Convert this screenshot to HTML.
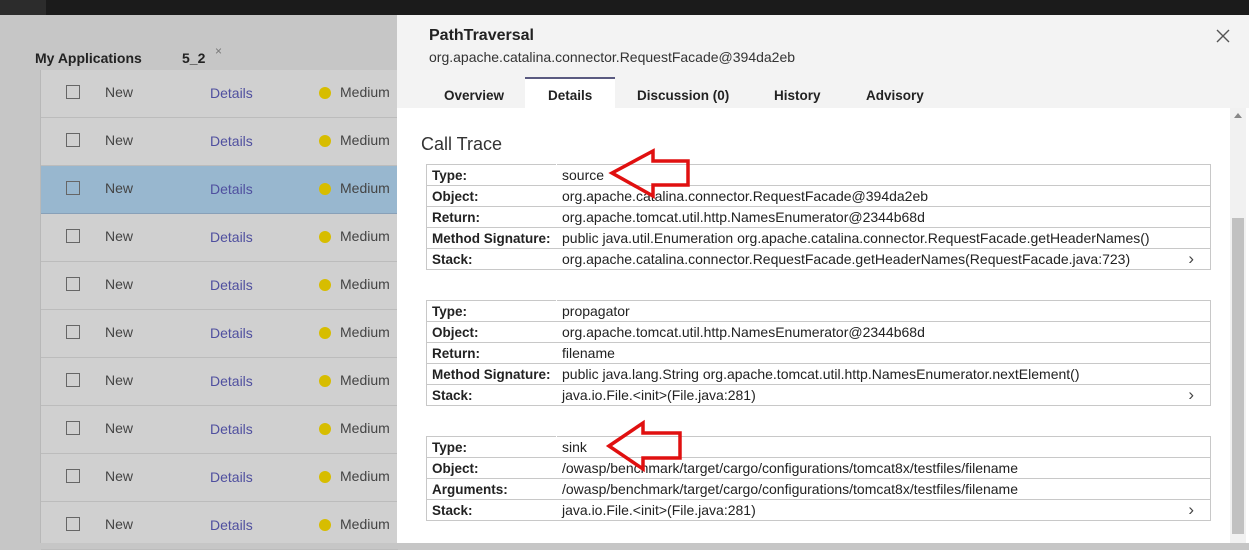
<!DOCTYPE html>
<html><head><style>
*{margin:0;padding:0;box-sizing:border-box}
body{width:1249px;height:543px;overflow:hidden;position:relative;background:#c6c6c6;font-family:"Liberation Sans",sans-serif;}
.top{position:absolute;left:0;top:0;width:1249px;height:15px;background:#1b1b1b}
.top2{position:absolute;left:0;top:0;width:46px;height:15px;background:#2c2c2c}
.apps{position:absolute;left:35px;top:50px;font-size:14px;font-weight:bold;color:#222}
.tab52{position:absolute;left:182px;top:50px;font-size:14px;font-weight:bold;color:#222}
.x52{position:absolute;left:215px;top:44px;font-size:12px;color:#777}
.rows{position:absolute;left:40px;top:70px;width:357px;height:473px;background:#d0d0d0;border-left:1px solid #b8b8b8}
.row{position:absolute;left:0;width:357px;height:48px;border-bottom:1px solid #bcbcbc;font-size:14px;color:#444}
.row.sel{background:#98b7cf;border-bottom-color:#88a0b8}
.cb{position:absolute;left:25px;top:15px;width:14px;height:14px;border:1px solid #666}
.new{position:absolute;left:64px;top:14px}
.det{position:absolute;left:169px;top:15px;color:#4f4f9f}
.dot{position:absolute;left:278px;top:17px;width:12px;height:12px;border-radius:50%;background:#d7bd00}
.med{position:absolute;left:299px;top:14px}
.panel{position:absolute;left:397px;top:15px;width:852px;height:528px;background:#fff}
.ph{position:absolute;left:0;top:0;width:852px;height:93px;background:#f3f3f3}
.title{position:absolute;left:32px;top:12px;font-size:16px;font-weight:bold;color:#222}
.sub{position:absolute;left:32px;top:34px;font-size:14px;color:#333}
.tab{position:absolute;top:73px;font-size:13.5px;font-weight:bold;color:#222}
.tabact{position:absolute;left:128px;top:62px;width:90px;height:31px;background:#fff;border-top:2px solid #5a5a80}
.ct{position:absolute;left:24px;top:119px;font-size:18px;color:#333}
table{position:absolute;left:29px;width:785px;border-collapse:collapse;table-layout:fixed;font-size:14px;color:#222}
td{border:1px solid #c8c8c8;height:21px;padding:0 5px;white-space:nowrap;overflow:visible}
td.k{font-weight:bold;width:130px;border-right-color:#fff;font-size:13.5px}
td.k+td{position:relative}
.ch{position:absolute;right:16px;top:0px;color:#444;font-size:17px}
.sb{position:absolute;left:1230px;top:108px;width:16px;height:435px;background:#f1f1f1}
.th{position:absolute;left:1232px;top:218px;width:12px;height:316px;background:#c1c1c1}
.up{position:absolute;left:1234px;top:113px;width:0;height:0;border-left:4px solid transparent;border-right:4px solid transparent;border-bottom:5px solid #888}
</style></head><body>
<div class="top"></div><div class="top2"></div>
<div class="apps">My Applications</div><div class="tab52">5_2</div><div class="x52">×</div>
<div class="rows">
<div class="row" style="top:0"><div class="cb"></div><div class="new">New</div><div class="det">Details</div><div class="dot"></div><div class="med">Medium</div></div>
<div class="row" style="top:48px"><div class="cb"></div><div class="new">New</div><div class="det">Details</div><div class="dot"></div><div class="med">Medium</div></div>
<div class="row sel" style="top:96px"><div class="cb"></div><div class="new">New</div><div class="det">Details</div><div class="dot"></div><div class="med">Medium</div></div>
<div class="row" style="top:144px"><div class="cb"></div><div class="new">New</div><div class="det">Details</div><div class="dot"></div><div class="med">Medium</div></div>
<div class="row" style="top:192px"><div class="cb"></div><div class="new">New</div><div class="det">Details</div><div class="dot"></div><div class="med">Medium</div></div>
<div class="row" style="top:240px"><div class="cb"></div><div class="new">New</div><div class="det">Details</div><div class="dot"></div><div class="med">Medium</div></div>
<div class="row" style="top:288px"><div class="cb"></div><div class="new">New</div><div class="det">Details</div><div class="dot"></div><div class="med">Medium</div></div>
<div class="row" style="top:336px"><div class="cb"></div><div class="new">New</div><div class="det">Details</div><div class="dot"></div><div class="med">Medium</div></div>
<div class="row" style="top:384px"><div class="cb"></div><div class="new">New</div><div class="det">Details</div><div class="dot"></div><div class="med">Medium</div></div>
<div class="row" style="top:432px"><div class="cb"></div><div class="new">New</div><div class="det">Details</div><div class="dot"></div><div class="med">Medium</div></div>
</div>
<div class="panel">
<div class="ph">
<div class="title">PathTraversal</div>
<div class="sub">org.apache.catalina.connector.RequestFacade@394da2eb</div>
<svg style="position:absolute;left:819px;top:14px" width="14" height="14"><path d="M1 1L13 13M13 1L1 13" stroke="#555" stroke-width="1.4"/></svg>
<div class="tabact"></div>
<div class="tab" style="left:47px">Overview</div>
<div class="tab" style="left:151px">Details</div>
<div class="tab" style="left:240px">Discussion (0)</div>
<div class="tab" style="left:377px">History</div>
<div class="tab" style="left:469px">Advisory</div>
</div>
<div class="ct">Call Trace</div>
<table style="top:149px">
<tr><td class="k">Type:</td><td>source</td></tr>
<tr><td class="k">Object:</td><td>org.apache.catalina.connector.RequestFacade@394da2eb</td></tr>
<tr><td class="k">Return:</td><td>org.apache.tomcat.util.http.NamesEnumerator@2344b68d</td></tr>
<tr><td class="k">Method Signature:</td><td>public java.util.Enumeration org.apache.catalina.connector.RequestFacade.getHeaderNames()</td></tr>
<tr><td class="k">Stack:</td><td>org.apache.catalina.connector.RequestFacade.getHeaderNames(RequestFacade.java:723)<span class="ch">›</span></td></tr>
</table>
<table style="top:285px">
<tr><td class="k">Type:</td><td>propagator</td></tr>
<tr><td class="k">Object:</td><td>org.apache.tomcat.util.http.NamesEnumerator@2344b68d</td></tr>
<tr><td class="k">Return:</td><td>filename</td></tr>
<tr><td class="k">Method Signature:</td><td>public java.lang.String org.apache.tomcat.util.http.NamesEnumerator.nextElement()</td></tr>
<tr><td class="k">Stack:</td><td>java.io.File.&lt;init&gt;(File.java:281)<span class="ch">›</span></td></tr>
</table>
<table style="top:421px">
<tr><td class="k">Type:</td><td>sink</td></tr>
<tr><td class="k">Object:</td><td>/owasp/benchmark/target/cargo/configurations/tomcat8x/testfiles/filename</td></tr>
<tr><td class="k">Arguments:</td><td>/owasp/benchmark/target/cargo/configurations/tomcat8x/testfiles/filename</td></tr>
<tr><td class="k">Stack:</td><td>java.io.File.&lt;init&gt;(File.java:281)<span class="ch">›</span></td></tr>
</table>
</div>
<div class="sb"></div><div class="th"></div><div class="up"></div>
<svg style="position:absolute;left:0;top:0" width="1249" height="543">
<polygon points="612,173 653,151 653,161 688,161 688,185 653,185 653,196" fill="none" stroke="#e01010" stroke-width="3.5" stroke-linejoin="miter"/>
<polygon points="609,446 643,423 643,433 680,433 680,458 643,458 643,469" fill="none" stroke="#e01010" stroke-width="3.5" stroke-linejoin="miter"/>
</svg>
</body></html>
